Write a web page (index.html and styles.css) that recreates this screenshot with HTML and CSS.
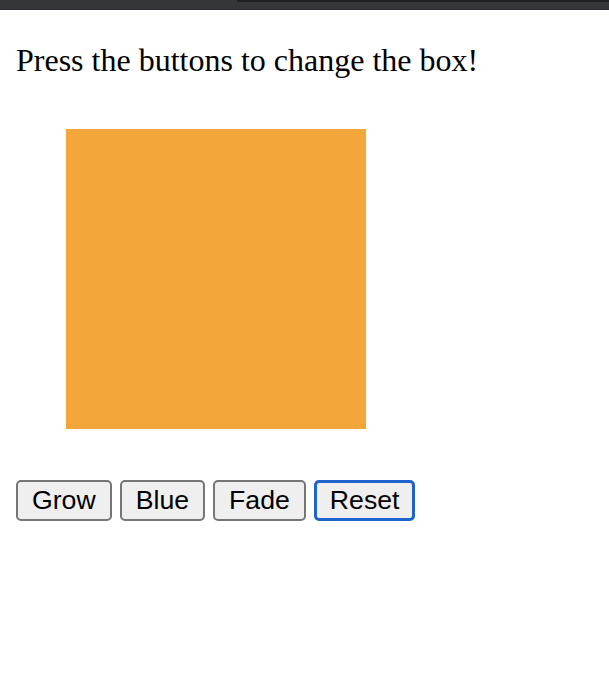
FILE: index.html
```html
<!DOCTYPE html>
<html>
<head>
<meta charset="utf-8">
<link rel="stylesheet" href="styles.css">
</head>
<body>
<div class="topbar"><div class="tab-edge"></div></div>
<div class="content">
  <p class="title">Press the buttons to change the box!</p>
  <div class="box"></div>
  <div class="buttons">
    <button class="btn">Grow</button>
    <button class="btn">Blue</button>
    <button class="btn">Fade</button>
    <button class="btn focused">Reset</button>
  </div>
</div>
</body>
</html>
```
FILE: styles.css
```css
html, body {
  margin: 0;
  padding: 0;
  background: #ffffff;
}
.topbar {
  height: 9px;
  background: #35363a;
  border-bottom: 1px solid #2a2b2e;
  display: flex;
  justify-content: flex-end;
}
.tab-edge {
  width: 372px;
  height: 2px;
  background: #202124;
}
.content {
  padding: 0 16px;
}
.title {
  margin: 32px 0;
  font-family: "Liberation Serif", "Times New Roman", serif;
  font-size: 32px;
  line-height: 37px;
  color: #000;
}
.box {
  width: 300px;
  height: 300px;
  margin: 50px;
  background: #f3a73b;
}
.buttons {
  display: flex;
  gap: 8px;
  padding-top: 1px;
}
.btn {
  font-family: "Liberation Sans", Arial, sans-serif;
  font-size: 26.67px;
  line-height: 31px;
  padding: 3px 14px;
  border: 2px solid #767676;
  border-radius: 5px;
  background: #efefef;
  color: #000;
  margin: 0;
}
.btn.focused {
  border: 3px solid #1f63cc;
  padding: 2px 13px;
}
```
